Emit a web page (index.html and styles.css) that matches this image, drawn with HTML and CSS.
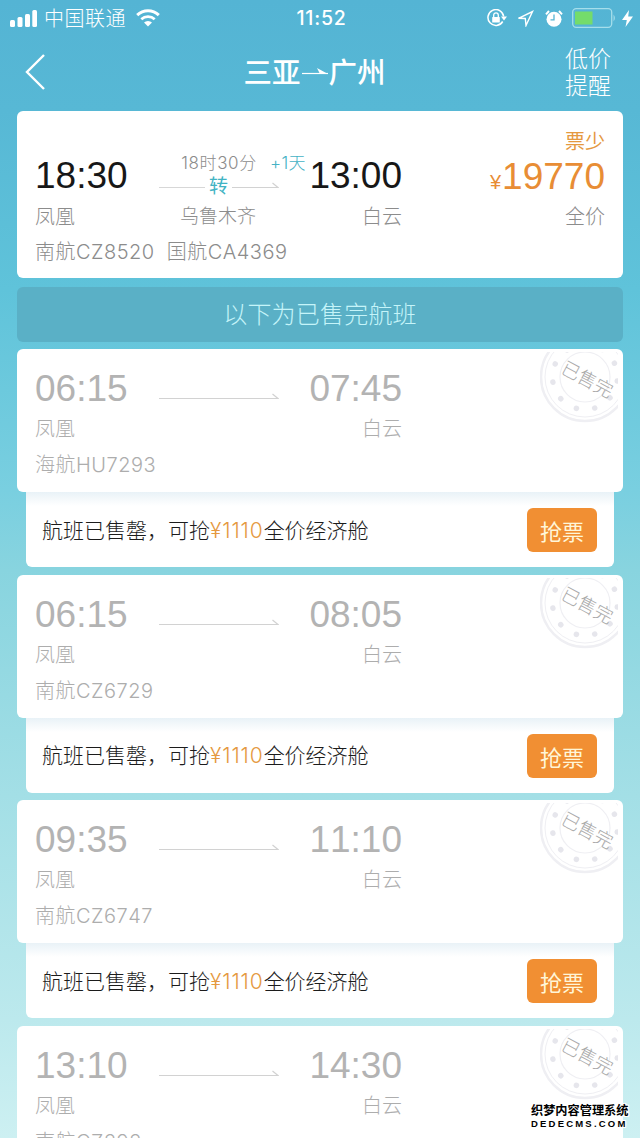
FILE: index.html
```html
<!DOCTYPE html>
<html lang="zh-CN">
<head>
<meta charset="utf-8">
<title>三亚—广州</title>
<link rel="stylesheet" href="styles.css">
</head>
<body>
<svg width="0" height="0" class="defs">
  <defs>
    <symbol id="arrow" viewBox="0 0 120 10"><path d="M0 7.500H119L113.500 3" fill="none" stroke="#d2d2d2" stroke-width="1.200"/></symbol>
    <symbol id="stamp" viewBox="0 0 78 72">
      <g fill="none" stroke="#efeff3">
        <circle cx="45" cy="25" r="44" stroke-width="2.500"/>
        <circle cx="45" cy="25" r="40" stroke-width="1"/>
        <circle cx="45" cy="25" r="25" stroke-width="1.200"/>
        <circle cx="45" cy="25" r="32.500" stroke="#e6e6ec" stroke-width="5.500" stroke-linecap="round" stroke-dasharray="0.100 18.460" stroke-dashoffset="-22.500"/>
      </g>
      <text x="47" y="34" text-anchor="middle" transform="rotate(28 47 28)" class="stamp-text">已售完</text>
    </symbol>
  </defs>
</svg>
<div class="screen">
  <header>
    <div class="status">
      <div class="status-left">
        <svg width="27" height="17" viewBox="0 0 27 17" fill="#fff"><rect x="0" y="10" width="5" height="7" rx="1.500"/><rect x="7.500" y="7" width="5" height="10" rx="1.500"/><rect x="15" y="4" width="5" height="13" rx="1.500"/><rect x="22.300" y="0" width="4.700" height="17" rx="1.500"/></svg>
        <span class="carrier">中国联通</span>
        <svg width="24" height="18" viewBox="0 0 24 18" fill="none" stroke="#fff"><path d="M1.200 6.200A15.500 15.500 0 0 1 22.800 6.200" stroke-width="3"/><path d="M5.300 10.300A9.700 9.700 0 0 1 18.700 10.300" stroke-width="2.700"/><path d="M12 17.500L8 13.500A5.800 5.800 0 0 1 16 13.500Z" fill="#fff" stroke="none"/></svg>
      </div>
      <span class="clock">11:52</span>
      <div class="status-right">
        <svg width="20" height="18" viewBox="0 0 20 18" fill="none" stroke="#fff"><path d="M15.700 12.500A7.900 7.900 0 1 1 16.700 7.500" stroke-width="1.500"/><path d="M14 7.500H20L17 11.500Z" fill="#fff" stroke="none"/><rect x="5.200" y="8" width="7.600" height="5.600" rx="0.600" fill="#fff" stroke="none"/><path d="M6.700 8V6.200A2.300 2.300 0 0 1 11.300 6.200V8" stroke-width="1.300"/></svg>
        <svg class="locate" width="17" height="17" viewBox="0 0 17 17" fill="none" stroke="#fff" stroke-width="1.400"><path d="M1.500 8.300L15.500 1.500L9 15.500L8.300 8.500Z"/></svg>
        <svg class="alarm" width="18" height="17" viewBox="0 0 18 17"><circle cx="9" cy="9.200" r="7.500" fill="#fff"/><path d="M1 4.300L4 1M17 4.300L14 1" stroke="#fff" stroke-width="2"/><path d="M9 4.500V9.800H5.500" fill="none" stroke="#55b5d4" stroke-width="1.300"/></svg>
        <svg class="battery" width="45" height="20" viewBox="0 0 45 20"><rect x="0.700" y="0.700" width="39" height="18.600" rx="3.500" fill="none" stroke="#a6deeb" stroke-width="1.300"/><rect x="3" y="3.500" width="17.500" height="13" fill="#74dc6b"/><path d="M41.500 6.500Q44.500 10 41.500 13.500Z" fill="#9bd8e8"/></svg>
        <svg width="11" height="17" viewBox="0 0 11 17" fill="#fff"><path d="M7 0L0 10H4.800L3.500 17L11 6.500H6.200Z"/></svg>
      </div>
    </div>
    <nav class="nav">
      <svg class="back" width="20" height="36" viewBox="0 0 20 36" fill="none" stroke="#fff" stroke-width="2.400"><path d="M19 1L2 18L19 35"/></svg>
      <h1 class="title"><span>三亚</span><svg width="26" height="10" viewBox="0 0 26 10"><path d="M0 5.500H26" stroke="#fff" stroke-width="1.200"/><path d="M15 0L26 6H18Z" fill="#fff"/></svg><span>广州</span></h1>
      <div class="remind">低价<br>提醒</div>
    </nav>
  </header>
  <main>
    <section class="card available">
      <div class="few">票少</div>
      <div class="time">18:30</div>
      <div class="via">
        <span class="duration">18时30分</span>
        <span class="transfer"><i class="line"></i><b>转</b><svg width="47" height="10" viewBox="73 0 47 10"><path d="M73 7.500H119L113.500 3" fill="none" stroke="#d2d2d2" stroke-width="1.200"/></svg></span>
        <span class="plus">+1天</span>
      </div>
      <div class="time right">13:00</div>
      <div class="price"><small>¥</small>19770</div>
      <div class="place">凤凰</div><div class="stop">乌鲁木齐</div><div class="place right">白云</div><div class="place right">全价</div>
      <div class="flight"><span>南航CZ8520</span><span>国航CA4369</span></div>
    </section>
    <div class="banner">以下为已售完航班</div>

    <article class="group">
      <section class="card sold">
        <div class="time">06:15</div><svg class="arrow"><use href="#arrow"/></svg><div class="time right">07:45</div>
        <div class="place origin">凤凰</div><div class="place right arrival">白云</div>
        <div class="flight">海航HU7293</div>
        <svg class="stamp"><use href="#stamp"/></svg>
      </section>
      <div class="offer"><p>航班已售罄，可抢<em>¥1110</em>全价经济舱</p><button>抢票</button></div>
    </article>
    <article class="group">
      <section class="card sold">
        <div class="time">06:15</div><svg class="arrow"><use href="#arrow"/></svg><div class="time right">08:05</div>
        <div class="place origin">凤凰</div><div class="place right arrival">白云</div>
        <div class="flight">南航CZ6729</div>
        <svg class="stamp"><use href="#stamp"/></svg>
      </section>
      <div class="offer"><p>航班已售罄，可抢<em>¥1110</em>全价经济舱</p><button>抢票</button></div>
    </article>
    <article class="group">
      <section class="card sold">
        <div class="time">09:35</div><svg class="arrow"><use href="#arrow"/></svg><div class="time right">11:10</div>
        <div class="place origin">凤凰</div><div class="place right arrival">白云</div>
        <div class="flight">南航CZ6747</div>
        <svg class="stamp"><use href="#stamp"/></svg>
      </section>
      <div class="offer"><p>航班已售罄，可抢<em>¥1110</em>全价经济舱</p><button>抢票</button></div>
    </article>
    <article class="group">
      <section class="card sold">
        <div class="time">13:10</div><svg class="arrow"><use href="#arrow"/></svg><div class="time right">14:30</div>
        <div class="place origin">凤凰</div><div class="place right arrival">白云</div>
        <div class="flight">南航CZ393</div>
        <svg class="stamp"><use href="#stamp"/></svg>
      </section>
    </article>
  </main>
  <div class="watermark"><div class="wm-name">织梦内容管理系统</div><div class="wm-site">DEDECMS.COM</div></div>
</div>
</body>
</html>
```
FILE: styles.css
```css
* { box-sizing: border-box; }
body { margin: 0; }
.defs { position: absolute; }
.screen {
  position: relative;
  width: 640px;
  height: 1138px;
  overflow: hidden;
  background: linear-gradient(#54b4d4 0, #57b8d5 110px, #5fc3da 290px, #79cfe0 490px, #88d4df 570px, #a3dfe6 795px, #bce9ed 1020px, #cdf0f2 1138px);
  font-family: Inter, "Noto Sans CJK SC", sans-serif;
  font-weight: 300;
  font-kerning: none;
  color: #8c8c8c;
}
header { height: 111px; color: #fff; }
.status { height: 34px; padding: 0 7px 0 10px; display: grid; grid-template-columns: 1fr 60px 1fr; align-items: center; }
.status-left, .status-right { display: flex; align-items: center; }
.status-right { justify-content: flex-end; }
.carrier { font-size: 20px; letter-spacing: .5px; margin: 0 10px 0 7px; line-height: 34px; padding-top: 1px; }
.clock { font-size: 19.500px; font-weight: 500; text-align: center; letter-spacing: .8px; line-height: 36px; white-space: nowrap; }
.locate { margin-left: 10px; }
.alarm { margin-left: 11px; }
.battery { margin: 0 5px 0 9px; }
.nav { height: 77px; padding: 0 29px 0 25px; display: grid; grid-template-columns: 64px 1fr 46px; align-items: center; }
.back { margin-bottom: 1px; }
.title { display: flex; align-items: center; justify-content: center; gap: 1px; margin: 0; padding-right: 25px; font-size: 28.500px; font-weight: 500; line-height: 40px; }
.remind { font-size: 23px; line-height: 27px; white-space: nowrap; }
main { padding: 0 17px; }
.card {
  position: relative;
  background: #fff;
  border-radius: 6px;
  padding: 0 18px;
  display: grid;
  grid-template-columns: 124px 120px 123px 1fr;
}
.right { text-align: right; }
.available { height: 167px; padding-top: 21px; grid-template-rows: 20px 47px 27px 20px; align-content: start; }
.few { grid-column: 1 / -1; text-align: right; color: #e5993f; font-size: 20px; line-height: 20px; font-weight: 400; }
.time { font-family: "Liberation Sans", sans-serif; font-weight: 400; font-size: 37px; line-height: 48px; color: #171717; white-space: nowrap; }
.price { color: #e88d35; font: 400 37px/50px "Liberation Sans", sans-serif; text-align: right; white-space: nowrap; }
.price small { font-size: 20px; margin-right: 1px; }
.via { position: relative; display: flex; flex-direction: column; align-items: center; padding-top: 1px; }
.duration { font-size: 17px; line-height: 20px; letter-spacing: .6px; }
.transfer { display: flex; align-items: center; justify-content: space-between; width: 120px; height: 24px; }
.transfer b { font-size: 19px; line-height: 24px; font-weight: 400; color: #41b3c3; padding-top: 3px; }
.line { width: 46px; height: 1px; background: #d7d7d7; margin-top: 5px; }
.plus { position: absolute; left: 111px; top: 1px; font-size: 17px; line-height: 20px; letter-spacing: .4px; color: #45b2c5; white-space: nowrap; }
.place, .stop, .flight { font-size: 20px; line-height: 36px; white-space: nowrap; }
.stop { font-size: 19px; text-align: center; padding-right: 2px; }
.flight { grid-column: 1 / -1; display: flex; gap: 12px; letter-spacing: .5px; }
.available .flight { padding-top: 8px; }
.banner { height: 55px; margin: 9px 0 7px; border-radius: 6px; background: #5ab0c6; color: #c5f4f9; font-size: 24px; line-height: 56px; text-align: center; letter-spacing: .2px; }
.group { height: 225.700px; }
.sold { height: 143px; padding-top: 16px; grid-template-rows: 46px 36px 36px; align-content: start; color: #adadad; z-index: 1; }
.sold .time { color: #b3b3b3; }
.arrow { width: 120px; height: 10px; margin-top: 26px; }
.origin { grid-column: 1; }
.arrival { grid-column: 2 / 4; }
.stamp { position: absolute; width: 78px; height: 72px; left: 523px; top: 3px; }
.stamp-text { font: 300 18.500px "Noto Sans CJK SC", sans-serif; fill: #a9a9a9; }
.offer { height: 75px; margin: 0 9px; padding: 0 17px 0 16px; display: flex; align-items: center; justify-content: space-between; border-radius: 0 0 6px 6px; background: linear-gradient(#e9f2f7, #fff 14px); color: #1c1c1c; }
.offer p { margin: 2px 0 0; font-size: 21px; line-height: 30px; white-space: nowrap; }
.offer em { font-style: normal; color: #e5993f; letter-spacing: .9px; }
.offer button { width: 70px; height: 44px; padding: 0; margin-top: 1px; border: 0; border-radius: 6px; background: #f18f33; color: #fff6d8; font: 400 22px/42px "Noto Sans CJK SC", sans-serif; }
.watermark { position: absolute; z-index: 2; left: 531px; top: 1104px; width: 100px; color: #000; text-shadow: 1px 0 #fff, -1px 0 #fff, 0 1px #fff, 0 -1px #fff, 1px 1px #fff, -1px -1px #fff, 1px -1px #fff, -1px 1px #fff; white-space: nowrap; }
.wm-name { font: 700 12.200px/13px "Noto Sans CJK SC", sans-serif; }
.wm-site { font: 700 9.500px/13px "Liberation Sans", sans-serif; letter-spacing: 2.200px; }
```
